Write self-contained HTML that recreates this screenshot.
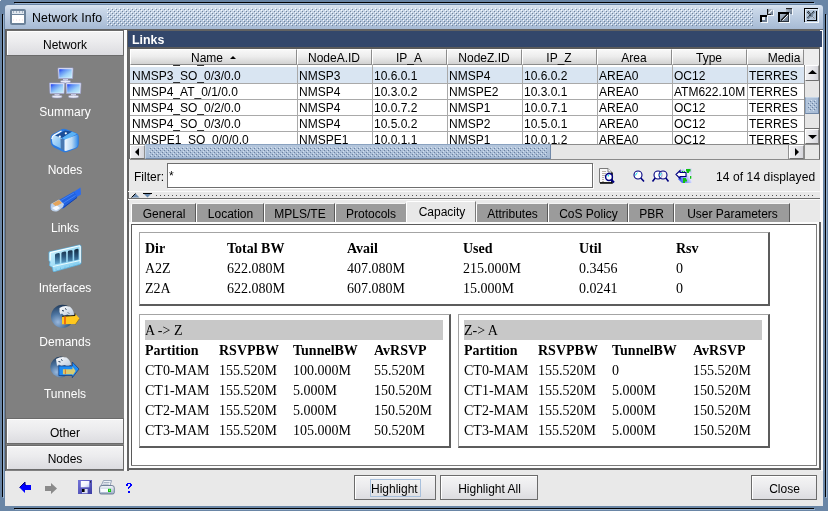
<!DOCTYPE html>
<html><head><meta charset="utf-8">
<style>
*{box-sizing:border-box;margin:0;padding:0}
html,body{width:828px;height:511px;overflow:hidden;background:#6a86a6;font-family:"Liberation Sans",sans-serif;font-size:12px;color:#000}
.a{position:absolute}
.t{position:absolute;white-space:pre;line-height:14px;height:14px}
.s{font-family:"Liberation Serif",serif;font-size:14px;line-height:16px;height:16px}
.b{font-weight:bold}
</style></head><body><div class="a" style="left:0;top:0;width:828px;height:511px;will-change:transform">
<div class="a" style="left:14px;top:2px;width:800px;height:1px;background:#000;"></div>
<div class="a" style="left:15px;top:3px;width:800px;height:1px;background:#9ab3cf;"></div>
<div class="a" style="left:2px;top:14px;width:1px;height:483px;background:#000;"></div>
<div class="a" style="left:3px;top:15px;width:1px;height:483px;background:#9ab3cf;"></div>
<div class="a" style="left:825px;top:14px;width:1px;height:483px;background:#000;"></div>
<div class="a" style="left:826px;top:15px;width:1px;height:483px;background:#9ab3cf;"></div>
<div class="a" style="left:14px;top:508px;width:800px;height:1px;background:#000;"></div>
<div class="a" style="left:15px;top:509px;width:800px;height:1px;background:#9ab3cf;"></div>
<div class="a" style="left:0px;top:0px;width:1px;height:1px;background:#e8eef4;"></div>
<div class="a" style="left:5px;top:5px;width:818px;height:24px;background:linear-gradient(#dae4f0,#c9d7e8 20%,#b3c5dc 70%,#a6bad4);border-radius:3px 3px 0 0"></div>
<svg class="a" style="left:107px;top:8px" width="646" height="18" viewBox="0 0 646 18"><defs><pattern id="tb" width="4" height="4" patternUnits="userSpaceOnUse"><rect x="0" y="0" width="1" height="1" fill="#f6f9fc"/><rect x="1" y="1" width="1" height="1" fill="#71839a"/><rect x="2" y="2" width="1" height="1" fill="#f6f9fc"/><rect x="3" y="3" width="1" height="1" fill="#71839a"/></pattern></defs><rect width="646" height="18" fill="url(#tb)"/></svg>
<div class="t " style="left:32px;top:11px;font-size:12.3px;letter-spacing:0.1px">Network Info</div>
<svg class="a" style="left:10px;top:9px" width="16" height="16" viewBox="0 0 16 16"><rect x="0" y="0" width="16" height="16" rx="2" fill="#6c829a"/><rect x="2" y="2" width="12" height="3" fill="#dfe6ee"/><path d="M3 3h1M6 3h1M9 3h1M12 3h1" stroke="#6c829a" stroke-width="1"/><rect x="2" y="6" width="12" height="8" fill="#fff"/><path d="M3 11h1M6 11h1M9 11h1M12 11h1" stroke="#f0d8e0" stroke-width="1"/></svg>
<svg class="a" style="left:756px;top:4px" width="44" height="22" viewBox="0 0 44 22"><defs><linearGradient id="tbg" x1="0" y1="0" x2="1" y2="1"><stop offset="0" stop-color="#c4d0dc"/><stop offset="1" stop-color="#5c6c82"/></linearGradient></defs><rect x="11" y="5" width="6" height="6" fill="url(#tbg)"/><rect x="11" y="5" width="1.2" height="6" fill="#101010"/><rect x="11" y="10" width="4" height="1" fill="#202020"/><path d="M16.5 5.5 L12.5 9.5" stroke="#f4f8fc" stroke-width="1.1"/><rect x="17" y="6" width="1" height="6" fill="#f4f8fc"/><rect x="12" y="11" width="6" height="1" fill="#f4f8fc"/><rect x="4" y="11" width="7" height="7" fill="#6c7c92"/><rect x="4" y="11" width="7" height="2" fill="#000"/><rect x="4" y="11" width="2" height="7" fill="#000"/><rect x="6" y="13" width="3" height="3" fill="#e6ecf2"/><rect x="5" y="18" width="7" height="1" fill="#f4f8fc"/><rect x="11" y="12" width="1" height="7" fill="#f4f8fc"/><rect x="30" y="4" width="6" height="6" fill="url(#tbg)"/><rect x="30" y="4" width="6" height="1.2" fill="#202020"/><rect x="36" y="5" width="1" height="6" fill="#f4f8fc"/><rect x="22" y="8" width="11" height="10" fill="url(#tbg)"/><rect x="22" y="8" width="11" height="2" fill="#000"/><rect x="22" y="8" width="2" height="10" fill="#000"/><rect x="24" y="17" width="9" height="1" fill="#2a323c"/><rect x="32" y="10" width="1" height="8" fill="#2a323c"/><path d="M25 16.5 L31.5 10" stroke="#101010" stroke-width="1.2"/><path d="M26.5 16.5 L32 11" stroke="#f0f4f8" stroke-width="1"/><rect x="23" y="18" width="11" height="1" fill="#f4f8fc"/><rect x="33" y="9" width="1" height="10" fill="#f4f8fc"/></svg>
<svg class="a" style="left:804px;top:8px" width="16" height="16" viewBox="0 0 16 16"><rect x="0" y="0" width="14" height="14" fill="#b4c6da"/><rect x="0" y="0" width="14" height="1" fill="#000"/><rect x="0" y="0" width="1" height="14" fill="#000"/><rect x="1" y="1" width="12" height="1" fill="#e4ecf4"/><rect x="1" y="1" width="1" height="12" fill="#e4ecf4"/><rect x="3" y="12" width="10" height="1" fill="#000"/><rect x="12" y="3" width="1" height="10" fill="#000"/><rect x="1" y="14" width="14" height="1" fill="#f4f8fc"/><rect x="14" y="1" width="1" height="14" fill="#f4f8fc"/><path d="M3.5 3.5 L10.5 10.5 M10.5 3.5 L3.5 10.5" stroke="#74869a" stroke-width="2.4"/><path d="M3 4 L6.5 7.5 M4 3 L7 6 M10 3 L3 10 " stroke="#000" stroke-width="0.9" stroke-dasharray="1 1"/><path d="M8 9 L10.5 11.5 M9 8 L11.5 10.5" stroke="#f0f4f8" stroke-width="0.9" stroke-dasharray="1 1"/></svg>
<div class="a" style="left:5px;top:29px;width:818px;height:477px;background:#e9e9e9;"></div>
<div class="a" style="left:5px;top:29px;width:818px;height:2px;background:#626262;"></div>
<div class="a" style="left:5px;top:31px;width:119px;height:440px;background:#808080;"></div>
<div class="a" style="left:5px;top:31px;width:1px;height:440px;background:#5e5e5e;"></div>
<div class="a" style="left:7px;top:31px;width:117px;height:25px;background:#fff;"></div>
<div class="a" style="left:6px;top:30px;width:118px;height:26px;background:transparent;border:1px solid #6b6b6b"></div>
<div class="a" style="left:8px;top:32px;width:115px;height:23px;background:linear-gradient(#f3f3f4,#ececee 40%,#dcdce0);"></div>
<div class="t " style="left:6px;width:118px;top:38px;text-align:center;">Network</div>
<div class="a" style="left:7px;top:419px;width:117px;height:25px;background:#fff;"></div>
<div class="a" style="left:6px;top:418px;width:118px;height:26px;background:transparent;border:1px solid #6b6b6b"></div>
<div class="a" style="left:8px;top:420px;width:115px;height:23px;background:linear-gradient(#f3f3f4,#ececee 40%,#dcdce0);"></div>
<div class="t " style="left:6px;width:118px;top:426px;text-align:center;">Other</div>
<div class="a" style="left:7px;top:446px;width:117px;height:24px;background:#fff;"></div>
<div class="a" style="left:6px;top:445px;width:118px;height:25px;background:transparent;border:1px solid #6b6b6b"></div>
<div class="a" style="left:8px;top:447px;width:115px;height:22px;background:linear-gradient(#f3f3f4,#ececee 40%,#dcdce0);"></div>
<div class="t " style="left:6px;width:118px;top:452px;text-align:center;">Nodes</div>
<div class="t " style="left:6px;width:118px;top:105px;text-align:center;color:#fff">Summary</div>
<div class="t " style="left:6px;width:118px;top:163px;text-align:center;color:#fff">Nodes</div>
<div class="t " style="left:6px;width:118px;top:221px;text-align:center;color:#fff">Links</div>
<div class="t " style="left:6px;width:118px;top:281px;text-align:center;color:#fff">Interfaces</div>
<div class="t " style="left:6px;width:118px;top:335px;text-align:center;color:#fff">Demands</div>
<div class="t " style="left:6px;width:118px;top:387px;text-align:center;color:#fff">Tunnels</div>
<svg class="a" style="left:48px;top:66px" width="34" height="34" viewBox="0 0 34 34"><defs><linearGradient id="scr" x1="0" y1="0" x2="1" y2="1"><stop offset="0" stop-color="#1a34f0"/><stop offset="0.25" stop-color="#5a8cf4"/><stop offset="0.6" stop-color="#9cd0f8"/><stop offset="1" stop-color="#c8f0fc"/></linearGradient></defs><path d="M10 2 H25 L24.5 12.5 H10.5Z" fill="#f2f3ff" stroke="#9aa0d0" stroke-width="0.7"/><rect x="11.2" y="3.2" width="12.6" height="8.6" fill="url(#scr)"/><path d="M15 13 h5 v1.5 h-5z" fill="#d4d6ea"/><ellipse cx="17.5" cy="15.6" rx="5.2" ry="1.5" fill="#e8eaf6" stroke="#8c91b8" stroke-width="0.6"/><path d="M1.5 17 H16.5 L16.0 27.5 H2.0Z" fill="#f2f3ff" stroke="#9aa0d0" stroke-width="0.7"/><rect x="2.7" y="18.2" width="12.6" height="8.6" fill="url(#scr)"/><path d="M6.5 28 h5 v1.5 h-5z" fill="#d4d6ea"/><ellipse cx="9.0" cy="30.6" rx="5.2" ry="1.5" fill="#e8eaf6" stroke="#8c91b8" stroke-width="0.6"/><path d="M18 17 H33 L32.5 27.5 H18.5Z" fill="#f2f3ff" stroke="#9aa0d0" stroke-width="0.7"/><rect x="19.2" y="18.2" width="12.6" height="8.6" fill="url(#scr)"/><path d="M23 28 h5 v1.5 h-5z" fill="#d4d6ea"/><ellipse cx="25.5" cy="30.6" rx="5.2" ry="1.5" fill="#e8eaf6" stroke="#8c91b8" stroke-width="0.6"/></svg>
<svg class="a" style="left:50px;top:128px" width="30" height="26" viewBox="0 0 30 26"><defs><linearGradient id="nf" x1="0" y1="0" x2="1" y2="0"><stop offset="0" stop-color="#f2f8fd"/><stop offset="0.55" stop-color="#b8d8f4"/><stop offset="1" stop-color="#3a90ea"/></linearGradient><linearGradient id="nl" x1="0" y1="0" x2="1" y2="1"><stop offset="0" stop-color="#d8f0ff"/><stop offset="1" stop-color="#6cb4f0"/></linearGradient></defs><path d="M0.5 11 Q0.5 7 3 6 L12 1 Q14 0.3 17 1.5 L26 5 Q28.8 6 28.8 9 L28.8 16 Q28.8 19 26 20.5 L17 24 Q15 24.8 13 23.8 L4 19.5 Q1 17.5 0.8 15 Z" fill="#2a7ae0"/><path d="M1.8 10.5 Q2 8 4 7 L10 4 L12 10 L11 20.5 L4 17 Q2.2 16 2.2 14 Z" fill="url(#nl)"/><path d="M1.8 11 Q2 8 4 7 L11.5 3" stroke="#ffffff" stroke-width="1.1" fill="none"/><path d="M5 7.5 L15 2.5 L22 3.8 L12 10 Z" fill="#1a4e98"/><path d="M12 10 L22 3.8 L27 5.8 L16 12 Z" fill="#5ab2f6"/><circle cx="9.8" cy="8.6" r="1.1" fill="#fff"/><circle cx="15.8" cy="5.3" r="1.1" fill="#fff"/><path d="M10.5 10.5 L14.5 11.5 L14.5 22.8 L10.8 20.8 Z" fill="#4a78b0"/><path d="M14.5 11.8 L27.8 6.5 L27.8 17 Q27.8 19 25 20 L16 23 L14.5 22.8 Z" fill="url(#nf)"/></svg>
<svg class="a" style="left:50px;top:187px" width="32" height="26" viewBox="0 0 32 26"><path d="M22 6 L30.5 0.5 L31 7.5 L25 11 Z" fill="#2a6cf0"/><path d="M9 13 L24 4.5 L27.5 10 L14 21 Q11 22.5 9.5 19.5 Z" fill="#2262e0"/><path d="M10 14 L24 6 M12 17 L25.5 8.5" stroke="#4a8af8" stroke-width="0.8"/><path d="M13.5 20.5 L27 10.5" stroke="#1440a8" stroke-width="1"/><path d="M0.8 17 L9 12.5 L14 17 L13 20 L8 24 Q3 25.5 1 22.5 Q0 19.5 0.8 17 Z" fill="#bcd0ea"/><path d="M2.5 16.5 L9 13 L12 16 L6 19.5 Z" fill="#e4a45c"/><path d="M2 21 L7 18.5 L10 21 L6 23.5 Z" fill="#f4f8ff"/><path d="M0.8 17 Q0 20 1 22.5" stroke="#6a8ec8" stroke-width="0.8" fill="none"/></svg>
<svg class="a" style="left:48px;top:243px" width="34" height="30" viewBox="0 0 34 30"><defs><linearGradient id="slot" x1="0" y1="0" x2="0" y2="1"><stop offset="0" stop-color="#14283c"/><stop offset="0.5" stop-color="#2c5a80"/><stop offset="1" stop-color="#62aad4"/></linearGradient><linearGradient id="frm" x1="0" y1="0" x2="1" y2="1"><stop offset="0" stop-color="#d8f6ff"/><stop offset="0.5" stop-color="#9edcf6"/><stop offset="1" stop-color="#7cc8ec"/></linearGradient></defs><path d="M1 9 L31.5 2 Q33 2 33 3.5 L33 20 Q33 21 32 21.3 L6.5 28.5 Q5 29 5 27.5 L4.5 24.5 L1.5 22.5 L2 19 L1 17.5 Z" fill="url(#frm)" stroke="#58b4e4" stroke-width="0.8"/><path d="M2 9.6 L31.5 2.8 L32.2 3.6 L32.2 19.8 M2.2 17.5 L2.2 10" stroke="#f8feff" stroke-width="1.1" fill="none"/><path d="M5 23.5 L32 17.5" stroke="#e8fbff" stroke-width="1" fill="none"/><path d="M8 25.5 v1.5 M12.5 24.5 v1.5 M17 23.5 v1.5 M21.5 22.5 v1.5 M26 21.5 v1.5" stroke="#70c4ec" stroke-width="1" fill="none"/><path d="M7 12 Q7 10.6 8.5 10.4 L10.5 10 Q11.8 9.8 11.8 11.2 L11.8 20.4 L7 21.3Z M13.4 10.6 Q13.4 9.2 14.8 9 L16.8 8.6 Q18.2 8.4 18.2 9.8 L18.2 19.2 L13.4 20.1Z M19.8 9.2 Q19.8 7.8 21.2 7.6 L23.2 7.2 Q24.6 7 24.6 8.4 L24.6 17.9 L19.8 18.8Z M26.2 7.8 Q26.2 6.4 27.6 6.2 L29.2 5.8 Q30.6 5.6 30.6 7 L30.6 16.6 L26.2 17.5Z" fill="url(#slot)"/></svg>
<svg class="a" style="left:50px;top:304px" width="32" height="25" viewBox="0 0 32 25"><defs><radialGradient id="glb" cx="0.3" cy="0.75" r="0.8"><stop offset="0" stop-color="#9ab8dc"/><stop offset="0.45" stop-color="#4c74a0"/><stop offset="1" stop-color="#1c3452"/></radialGradient><linearGradient id="cont" x1="0" y1="0" x2="1" y2="1"><stop offset="0" stop-color="#ffffff"/><stop offset="1" stop-color="#b8c8dc"/></linearGradient></defs><circle cx="12.5" cy="12.3" r="11.5" fill="url(#glb)"/><path d="M9.5 4 Q14.5 0.5 20 2.8 Q24 6 24 11 L20.5 12 L17.5 10.5 L14 11.5 L12 9.5 L10.5 10.5 L9.5 8 Z" fill="url(#cont)"/><path d="M15 4.5 l1.5 1 M12 6.5 l2 0.5 M18 8.5 l1 1" stroke="#1c3452" stroke-width="1"/><path d="M12 12.3 L25 11.5 L25 9.5 L29.5 14.6 L25 21 L25 20 L12 20.3 Z" fill="#ffc81e"/><path d="M12 12.3 L25 11.5 L25 9.5" stroke="#101010" stroke-width="0.9" fill="none"/><path d="M25 21 L29.5 14.6" stroke="#806010" stroke-width="0.6" fill="none"/><rect x="14" y="12.5" width="2" height="7.8" fill="#f07010"/></svg>
<svg class="a" style="left:49px;top:356px" width="32" height="24" viewBox="0 0 32 24"><defs><radialGradient id="glb2" cx="0.3" cy="0.75" r="0.8"><stop offset="0" stop-color="#9ab8dc"/><stop offset="0.45" stop-color="#4c74a0"/><stop offset="1" stop-color="#1c3452"/></radialGradient></defs><circle cx="11.7" cy="11" r="10.4" fill="url(#glb2)"/><path d="M7 3 Q12 0 17.5 1.5 Q21.5 4 22 9 L18.5 10.5 L15.5 9 L12.5 10 L10 8.5 L8 10 Z" fill="url(#cont)"/><path d="M12 3.5 l1.5 1 M9.5 5.5 l2 0.5" stroke="#1c3452" stroke-width="1"/><path d="M9.8 10 L23.3 10 L23.3 6 L30 13 L23.3 21.7 L23.3 19.5 L9.8 19.5 Z" fill="#1e8cf4" stroke="#0a2c70" stroke-width="0.6"/><path d="M13.9 13.2 L23.5 13.2 L23.5 10.5 L26.7 15 L23.5 19.5 L23.5 18.2 L13.9 18.2 Z" fill="#d8cc70"/><rect x="15.8" y="13.2" width="1.2" height="5" fill="#e08030"/></svg>
<div class="a" style="left:124px;top:30px;width:3px;height:441px;background:#fbfbfb;"></div>
<div class="a" style="left:127px;top:30px;width:2px;height:441px;background:#646464;"></div>
<div class="a" style="left:129px;top:222px;width:2px;height:246px;background:#fbfbfb;"></div>
<div class="a" style="left:820px;top:30px;width:3px;height:441px;background:#fafafa;"></div>
<div class="a" style="left:128px;top:31px;width:694px;height:16px;background:#33476b;"></div>
<div class="t " style="left:132px;top:33px;font-size:12.4px;color:#fff;font-weight:bold">Links</div>
<div class="a" style="left:128px;top:47px;width:692px;height:2px;background:#5c5c5c;"></div>
<div class="a" style="left:128px;top:49px;width:2px;height:110px;background:#6a6a6a;"></div>
<div class="a" style="left:130px;top:49px;width:674px;height:95px;background:#fff;"></div>
<div class="a" style="left:130px;top:65px;width:674px;height:79px;overflow:hidden;background:#fff">
<div class="t" style="left:2px;top:-13px">NMSP3_SO_0/2/0.0</div>
<div class="a" style="left:0px;top:2px;width:674px;height:16px;background:#d9e5f2"></div>
<div class="t" style="left:2px;top:4px;width:164px;overflow:hidden">NMSP3_SO_0/3/0.0</div>
<div class="t" style="left:169px;top:4px;width:72px;overflow:hidden">NMSP3</div>
<div class="t" style="left:244px;top:4px;width:72px;overflow:hidden">10.6.0.1</div>
<div class="t" style="left:319px;top:4px;width:72px;overflow:hidden">NMSP4</div>
<div class="t" style="left:394px;top:4px;width:72px;overflow:hidden">10.6.0.2</div>
<div class="t" style="left:469px;top:4px;width:72px;overflow:hidden">AREA0</div>
<div class="t" style="left:544px;top:4px;width:72px;overflow:hidden">OC12</div>
<div class="t" style="left:619px;top:4px;width:54px;overflow:hidden">TERRES</div>
<div class="t" style="left:2px;top:20px;width:164px;overflow:hidden">NMSP4_AT_0/1/0.0</div>
<div class="t" style="left:169px;top:20px;width:72px;overflow:hidden">NMSP4</div>
<div class="t" style="left:244px;top:20px;width:72px;overflow:hidden">10.3.0.2</div>
<div class="t" style="left:319px;top:20px;width:72px;overflow:hidden">NMSPE2</div>
<div class="t" style="left:394px;top:20px;width:72px;overflow:hidden">10.3.0.1</div>
<div class="t" style="left:469px;top:20px;width:72px;overflow:hidden">AREA0</div>
<div class="t" style="left:544px;top:20px;width:72px;overflow:hidden">ATM622.10M</div>
<div class="t" style="left:619px;top:20px;width:54px;overflow:hidden">TERRES</div>
<div class="a" style="left:0px;top:18px;width:674px;height:1px;background:#a9a9a9"></div>
<div class="t" style="left:2px;top:36px;width:164px;overflow:hidden">NMSP4_SO_0/2/0.0</div>
<div class="t" style="left:169px;top:36px;width:72px;overflow:hidden">NMSP4</div>
<div class="t" style="left:244px;top:36px;width:72px;overflow:hidden">10.0.7.2</div>
<div class="t" style="left:319px;top:36px;width:72px;overflow:hidden">NMSP1</div>
<div class="t" style="left:394px;top:36px;width:72px;overflow:hidden">10.0.7.1</div>
<div class="t" style="left:469px;top:36px;width:72px;overflow:hidden">AREA0</div>
<div class="t" style="left:544px;top:36px;width:72px;overflow:hidden">OC12</div>
<div class="t" style="left:619px;top:36px;width:54px;overflow:hidden">TERRES</div>
<div class="a" style="left:0px;top:34px;width:674px;height:1px;background:#a9a9a9"></div>
<div class="t" style="left:2px;top:52px;width:164px;overflow:hidden">NMSP4_SO_0/3/0.0</div>
<div class="t" style="left:169px;top:52px;width:72px;overflow:hidden">NMSP4</div>
<div class="t" style="left:244px;top:52px;width:72px;overflow:hidden">10.5.0.2</div>
<div class="t" style="left:319px;top:52px;width:72px;overflow:hidden">NMSP2</div>
<div class="t" style="left:394px;top:52px;width:72px;overflow:hidden">10.5.0.1</div>
<div class="t" style="left:469px;top:52px;width:72px;overflow:hidden">AREA0</div>
<div class="t" style="left:544px;top:52px;width:72px;overflow:hidden">OC12</div>
<div class="t" style="left:619px;top:52px;width:54px;overflow:hidden">TERRES</div>
<div class="a" style="left:0px;top:50px;width:674px;height:1px;background:#a9a9a9"></div>
<div class="t" style="left:2px;top:68px;width:164px;overflow:hidden">NMSPE1_SO_0/0/0.0</div>
<div class="t" style="left:169px;top:68px;width:72px;overflow:hidden">NMSPE1</div>
<div class="t" style="left:244px;top:68px;width:72px;overflow:hidden">10.0.1.1</div>
<div class="t" style="left:319px;top:68px;width:72px;overflow:hidden">NMSP1</div>
<div class="t" style="left:394px;top:68px;width:72px;overflow:hidden">10.0.1.2</div>
<div class="t" style="left:469px;top:68px;width:72px;overflow:hidden">AREA0</div>
<div class="t" style="left:544px;top:68px;width:72px;overflow:hidden">OC12</div>
<div class="t" style="left:619px;top:68px;width:54px;overflow:hidden">TERRES</div>
<div class="a" style="left:0px;top:66px;width:674px;height:1px;background:#a9a9a9"></div>
<div class="a" style="left:0px;top:82px;width:674px;height:1px;background:#a9a9a9"></div>
<div class="a" style="left:167px;top:0px;width:1px;height:79px;background:#a9a9a9"></div>
<div class="a" style="left:242px;top:0px;width:1px;height:79px;background:#a9a9a9"></div>
<div class="a" style="left:317px;top:0px;width:1px;height:79px;background:#a9a9a9"></div>
<div class="a" style="left:392px;top:0px;width:1px;height:79px;background:#a9a9a9"></div>
<div class="a" style="left:467px;top:0px;width:1px;height:79px;background:#a9a9a9"></div>
<div class="a" style="left:542px;top:0px;width:1px;height:79px;background:#a9a9a9"></div>
<div class="a" style="left:617px;top:0px;width:1px;height:79px;background:#a9a9a9"></div>
</div>
<div class="a" style="left:130px;top:49px;width:167px;height:16px;background:linear-gradient(#f8f8f8,#ededed 45%,#d2d2d2);border-top:1px solid #fff;border-left:1px solid #fff;border-right:1px solid #8c8c8c;border-bottom:1px solid #8c8c8c"></div>
<div class="t " style="left:191px;top:51px;">Name</div>
<div class="a" style="left:297px;top:49px;width:75px;height:16px;background:linear-gradient(#f8f8f8,#ededed 45%,#d2d2d2);border-top:1px solid #fff;border-left:1px solid #fff;border-right:1px solid #8c8c8c;border-bottom:1px solid #8c8c8c"></div>
<div class="t " style="left:297px;width:74px;top:51px;text-align:center;">NodeA.ID</div>
<div class="a" style="left:372px;top:49px;width:75px;height:16px;background:linear-gradient(#f8f8f8,#ededed 45%,#d2d2d2);border-top:1px solid #fff;border-left:1px solid #fff;border-right:1px solid #8c8c8c;border-bottom:1px solid #8c8c8c"></div>
<div class="t " style="left:372px;width:74px;top:51px;text-align:center;">IP_A</div>
<div class="a" style="left:447px;top:49px;width:75px;height:16px;background:linear-gradient(#f8f8f8,#ededed 45%,#d2d2d2);border-top:1px solid #fff;border-left:1px solid #fff;border-right:1px solid #8c8c8c;border-bottom:1px solid #8c8c8c"></div>
<div class="t " style="left:447px;width:74px;top:51px;text-align:center;">NodeZ.ID</div>
<div class="a" style="left:522px;top:49px;width:75px;height:16px;background:linear-gradient(#f8f8f8,#ededed 45%,#d2d2d2);border-top:1px solid #fff;border-left:1px solid #fff;border-right:1px solid #8c8c8c;border-bottom:1px solid #8c8c8c"></div>
<div class="t " style="left:522px;width:74px;top:51px;text-align:center;">IP_Z</div>
<div class="a" style="left:597px;top:49px;width:75px;height:16px;background:linear-gradient(#f8f8f8,#ededed 45%,#d2d2d2);border-top:1px solid #fff;border-left:1px solid #fff;border-right:1px solid #8c8c8c;border-bottom:1px solid #8c8c8c"></div>
<div class="t " style="left:597px;width:74px;top:51px;text-align:center;">Area</div>
<div class="a" style="left:672px;top:49px;width:75px;height:16px;background:linear-gradient(#f8f8f8,#ededed 45%,#d2d2d2);border-top:1px solid #fff;border-left:1px solid #fff;border-right:1px solid #8c8c8c;border-bottom:1px solid #8c8c8c"></div>
<div class="t " style="left:672px;width:74px;top:51px;text-align:center;">Type</div>
<div class="a" style="left:747px;top:49px;width:57px;height:16px;background:linear-gradient(#f8f8f8,#ededed 45%,#d2d2d2);border-top:1px solid #fff;border-left:1px solid #fff;border-right:1px solid #8c8c8c;border-bottom:1px solid #8c8c8c"></div>
<div class="t " style="left:747px;width:74px;top:51px;text-align:center;">Media</div>
<svg class="a" style="left:230px;top:56px" width="6" height="3" viewBox="0 0 6 3"><path d="M0 3 L3 0 L6 3Z" fill="#000"/></svg>
<div class="a" style="left:804px;top:49px;width:15px;height:16px;background:#ededed;"></div>
<div class="a" style="left:819px;top:47px;width:1px;height:113px;background:#6a6a6a;"></div>
<div class="a" style="left:804px;top:65px;width:15px;height:79px;background:#e6e6e6;"></div>
<div class="a" style="left:804px;top:65px;width:1px;height:80px;background:#8a8a8a;"></div>
<div class="a" style="left:805px;top:65px;width:14px;height:16px;background:linear-gradient(90deg,#f0f0f2,#e4e4e8 60%,#d6d6dc);border-top:1px solid #fff;border-left:1px solid #fff;border-bottom:1px solid #707070;border-right:1px solid #909090"></div>
<svg class="a" style="left:808px;top:70px" width="9" height="4" viewBox="0 0 9 4"><path d="M0 4 L4.5 0 L9 4Z" fill="#000"/></svg>
<div class="a" style="left:805px;top:97px;width:14px;height:17px;background:linear-gradient(90deg,#b4c6dc,#a4b9d4);border-top:1px solid #c6d6e8;border-left:1px solid #8aa2c0;border-bottom:1px solid #7088a8;border-right:1px solid #7088a8"></div>
<svg class="a" style="left:806px;top:98px" width="12" height="15" viewBox="0 0 12 15"><defs><pattern id="vs" width="4" height="4" patternUnits="userSpaceOnUse"><rect x="0" y="3" width="1" height="1" fill="#6a80a0"/><rect x="2" y="1" width="1" height="1" fill="#6a80a0"/><rect x="3" y="0" width="1" height="1" fill="#d4e0ee"/><rect x="1" y="2" width="1" height="1" fill="#d4e0ee"/></pattern></defs><rect x="2" y="2" width="9" height="11" fill="url(#vs)"/></svg>
<div class="a" style="left:805px;top:128px;width:14px;height:1px;background:#707070;"></div>
<div class="a" style="left:805px;top:129px;width:14px;height:15px;background:linear-gradient(90deg,#f0f0f2,#e4e4e8 60%,#d6d6dc);border-top:1px solid #fff;border-left:1px solid #fff;border-bottom:1px solid #707070;border-right:1px solid #909090"></div>
<svg class="a" style="left:808px;top:135px" width="9" height="4" viewBox="0 0 9 4"><path d="M0 0 L4.5 4 L9 0Z" fill="#000"/></svg>
<div class="a" style="left:130px;top:144px;width:674px;height:15px;background:#e6e6e6;border-top:1px solid #8c8c8c"></div>
<div class="a" style="left:130px;top:145px;width:15px;height:14px;background:linear-gradient(90deg,#f0f0f2,#e4e4e8 60%,#d6d6dc);border-top:1px solid #fff;border-left:1px solid #fff;border-bottom:1px solid #707070;border-right:1px solid #909090"></div>
<svg class="a" style="left:135px;top:148px" width="4" height="8" viewBox="0 0 4 8"><path d="M4 0 L0 4 L4 8Z" fill="#000"/></svg>
<div class="a" style="left:145px;top:144px;width:406px;height:15px;background:linear-gradient(#b4c6dc,#a4b9d4);border-top:1px solid #8aa2c0;border-left:1px solid #c6d6e8;border-bottom:1px solid #7088a8;border-right:1px solid #7088a8"></div>
<svg class="a" style="left:146px;top:145px" width="404" height="13" viewBox="0 0 404 13"><defs><pattern id="hs" width="4" height="4" patternUnits="userSpaceOnUse"><rect x="0" y="3" width="1" height="1" fill="#6a80a0"/><rect x="2" y="1" width="1" height="1" fill="#6a80a0"/><rect x="3" y="0" width="1" height="1" fill="#d4e0ee"/><rect x="1" y="2" width="1" height="1" fill="#d4e0ee"/></pattern></defs><rect x="3" y="2" width="398" height="10" fill="url(#hs)"/></svg>
<div class="a" style="left:788px;top:145px;width:1px;height:14px;background:#909090;"></div>
<div class="a" style="left:789px;top:145px;width:15px;height:14px;background:linear-gradient(90deg,#f0f0f2,#e4e4e8 60%,#d6d6dc);border-top:1px solid #fff;border-left:1px solid #fff;border-bottom:1px solid #707070;border-right:1px solid #909090"></div>
<svg class="a" style="left:795px;top:148px" width="4" height="8" viewBox="0 0 4 8"><path d="M0 0 L4 4 L0 8Z" fill="#000"/></svg>
<div class="a" style="left:804px;top:144px;width:15px;height:15px;background:#e8e8e8;border-left:1px solid #8a8a8a;border-top:1px solid #8a8a8a"></div>
<div class="a" style="left:130px;top:159px;width:690px;height:1px;background:#8a8a8a;"></div>
<div class="t " style="left:134px;top:170px;">Filter:</div>
<div class="a" style="left:168px;top:164px;width:426px;height:25px;background:#fff;"></div>
<div class="a" style="left:167px;top:163px;width:426px;height:25px;background:#fff;border:1px solid #6e6e6e"></div>
<div class="t " style="left:169px;top:169px;">*</div>
<div class="t " style="left:716px;top:170px;letter-spacing:0.1px">14 of 14 displayed</div>
<svg class="a" style="left:598px;top:167px" width="18" height="18" viewBox="0 0 18 18"><path d="M1.5 1.5 H10 L13.5 5 V15.5 H1.5Z" fill="#fafafa" stroke="#7a7a7a" stroke-width="1"/><path d="M2 16 H14 V5.5" fill="none" stroke="#000" stroke-width="1.6"/><path d="M10 1.5 V5 H13.5" fill="#fff" stroke="#7a7a7a" stroke-width="1"/><path d="M4 4.5 h4 M4 6.5 h4 M4 8.5 h3 M4 10.5 h2 M4 12.5 h2 M4 14.5 h2" stroke="#b8b0a8" stroke-width="1"/><circle cx="11" cy="10" r="3.4" fill="#fff" stroke="#000080" stroke-width="1.5"/><path d="M9.8 9.2 l1 -1" stroke="#00e0f0" stroke-width="1.3"/><path d="M13.3 12.8 L16 15.5" stroke="#000080" stroke-width="2"/></svg>
<svg class="a" style="left:632px;top:170px" width="40" height="14" viewBox="0 0 40 14"><circle cx="6" cy="5" r="4" fill="#fff" stroke="#000080" stroke-width="1.1"/><path d="M3.6 5.5 Q3.8 3.5 5.5 2.8" stroke="#00d8f0" stroke-width="1" fill="none"/><path d="M8.8 8 L12 11.5" stroke="#000080" stroke-width="1.6"/><circle cx="26" cy="5" r="4" fill="#fff" stroke="#000080" stroke-width="1.1"/><circle cx="31" cy="5" r="4" fill="#fff" fill-opacity="0.6" stroke="#000080" stroke-width="1.1"/><path d="M27.8 6 Q28 4 29.5 3" stroke="#00d8f0" stroke-width="1" fill="none"/><path d="M23.2 8 L20.5 11.5 M33.8 8 L36.5 11.5" stroke="#000080" stroke-width="1.6"/></svg>
<svg class="a" style="left:675px;top:168px" width="18" height="16" viewBox="0 0 18 16"><defs><linearGradient id="g2" x1="0" y1="1" x2="1" y2="0.3"><stop offset="0" stop-color="#2040f0"/><stop offset="0.45" stop-color="#8a9cf8"/><stop offset="0.8" stop-color="#f0f0ff"/><stop offset="1" stop-color="#c8ccf8"/></linearGradient></defs><path d="M9 0.5 L16.5 0.5 L16.5 15 L7 15 L3.5 11.5 L3.5 4 Z" fill="url(#g2)"/><path d="M11 1 h4.5 v2.5 h-1.5 v1.5 h-2 v-1.5 h-1Z M7 3 h1.2 v1.2 h-1.2Z M9 3 h1 v1 h-1Z M8 10 h3 v1.5 h1 v2 h-2 v1.5 h-2Z M15 8 h1.3 v2.8 h-1.3Z" fill="#10c010"/><path d="M1 6.5 L5 2.5 L5 4.5 L11 4.5 L11 8.5 L5 8.5 L5 10.5 Z" fill="#fff" stroke="#000080" stroke-width="1.1" stroke-linejoin="miter"/></svg>
<div class="a" style="left:128px;top:191px;width:692px;height:1px;background:#fafafa;"></div>
<div class="a" style="left:128px;top:198px;width:692px;height:1px;background:#6e6e6e;"></div>
<svg class="a" style="left:131px;top:193px" width="22" height="5" viewBox="0 0 22 5"><path d="M0.5 4.5 L4.5 0.5 L8.5 4.5Z" fill="#6c8cb0"/><path d="M0.5 4.5 L4.5 0.5" stroke="#000" stroke-width="1"/><path d="M12.5 0.5 L20.5 0.5 L16.5 4.5Z" fill="#6c8cb0"/><path d="M12 0.5 H21" stroke="#000" stroke-width="1"/></svg>
<svg class="a" style="left:156px;top:195px" width="660" height="1" viewBox="0 0 660 1"><defs><pattern id="dd" width="4" height="1" patternUnits="userSpaceOnUse"><rect x="0" y="0" width="1" height="1" fill="#555"/></pattern></defs><rect width="660" height="1" fill="url(#dd)"/></svg>
<div class="a" style="left:128px;top:199px;width:692px;height:1px;background:#fbfbfb;"></div>
<div class="a" style="left:130px;top:222px;width:689px;height:2px;background:#fdfdfd;"></div>
<div class="a" style="left:131px;top:224px;width:686px;height:1px;background:#5a5a5a;"></div>
<div class="a" style="left:131px;top:203px;width:65px;height:19px;background:#9b9b9b;border-left:1px solid #fff;border-top:1px solid #f4f4f4;border-right:1px solid #5a5a5a;border-top-left-radius:2px"></div>
<div class="t " style="left:132px;width:64px;top:207px;text-align:center;">General</div>
<div class="a" style="left:196px;top:203px;width:68px;height:19px;background:#9b9b9b;border-left:1px solid #fff;border-top:1px solid #f4f4f4;border-right:1px solid #5a5a5a;border-top-left-radius:2px"></div>
<div class="t " style="left:197px;width:67px;top:207px;text-align:center;">Location</div>
<div class="a" style="left:264px;top:203px;width:71px;height:19px;background:#9b9b9b;border-left:1px solid #fff;border-top:1px solid #f4f4f4;border-right:1px solid #5a5a5a;border-top-left-radius:2px"></div>
<div class="t " style="left:265px;width:70px;top:207px;text-align:center;">MPLS/TE</div>
<div class="a" style="left:335px;top:203px;width:71px;height:19px;background:#9b9b9b;border-left:1px solid #fff;border-top:1px solid #f4f4f4;border-right:1px solid #9b9b9b;border-top-left-radius:2px"></div>
<div class="t " style="left:336px;width:70px;top:207px;text-align:center;">Protocols</div>
<div class="a" style="left:406px;top:201px;width:70px;height:21px;background:#e8e8e8;border-left:1px solid #fff;border-top:1px solid #fff;border-right:1px solid #7a7a7a;border-top-left-radius:2px"></div>
<div class="t " style="left:407px;width:70px;top:205px;text-align:center;">Capacity</div>
<div class="a" style="left:476px;top:203px;width:72px;height:19px;background:#9b9b9b;border-left:1px solid #fff;border-top:1px solid #f4f4f4;border-right:1px solid #5a5a5a;border-top-left-radius:2px"></div>
<div class="t " style="left:477px;width:71px;top:207px;text-align:center;">Attributes</div>
<div class="a" style="left:548px;top:203px;width:80px;height:19px;background:#9b9b9b;border-left:1px solid #fff;border-top:1px solid #f4f4f4;border-right:1px solid #5a5a5a;border-top-left-radius:2px"></div>
<div class="t " style="left:549px;width:79px;top:207px;text-align:center;">CoS Policy</div>
<div class="a" style="left:628px;top:203px;width:46px;height:19px;background:#9b9b9b;border-left:1px solid #fff;border-top:1px solid #f4f4f4;border-right:1px solid #5a5a5a;border-top-left-radius:2px"></div>
<div class="t " style="left:629px;width:45px;top:207px;text-align:center;">PBR</div>
<div class="a" style="left:674px;top:203px;width:116px;height:19px;background:#9b9b9b;border-left:1px solid #fff;border-top:1px solid #f4f4f4;border-right:1px solid #5a5a5a;border-top-left-radius:2px"></div>
<div class="t " style="left:675px;width:115px;top:207px;text-align:center;">User Parameters</div>
<div class="a" style="left:131px;top:224px;width:1px;height:242px;background:#5a5a5a;"></div>
<div class="a" style="left:132px;top:225px;width:684px;height:240px;background:#fff;"></div>
<div class="a" style="left:816px;top:224px;width:1px;height:242px;background:#7c7c7c;"></div>
<div class="a" style="left:131px;top:465px;width:686px;height:1px;background:#7c7c7c;"></div>
<div class="a" style="left:817px;top:222px;width:2px;height:246px;background:#fdfdfd;"></div>
<div class="a" style="left:130px;top:466px;width:689px;height:2px;background:#fdfdfd;"></div>
<div class="a" style="left:819px;top:222px;width:2px;height:248px;background:#626262;"></div>
<div class="a" style="left:128px;top:468px;width:693px;height:2px;background:#626262;"></div>
<div class="a" style="left:139px;top:232px;width:631px;height:74px;background:#fff;border-top:1px solid #a4a4a4;border-left:1px solid #a4a4a4;border-right:2px solid #5c5c5c;border-bottom:2px solid #5c5c5c"></div>
<div class="t s b" style="left:145px;top:241px;">Dir</div>
<div class="t s b" style="left:227px;top:241px;">Total BW</div>
<div class="t s b" style="left:347px;top:241px;">Avail</div>
<div class="t s b" style="left:463px;top:241px;">Used</div>
<div class="t s b" style="left:579px;top:241px;">Util</div>
<div class="t s b" style="left:676px;top:241px;">Rsv</div>
<div class="t s" style="left:145px;top:261px;">A2Z</div>
<div class="t s" style="left:227px;top:261px;">622.080M</div>
<div class="t s" style="left:347px;top:261px;">407.080M</div>
<div class="t s" style="left:463px;top:261px;">215.000M</div>
<div class="t s" style="left:579px;top:261px;">0.3456</div>
<div class="t s" style="left:676px;top:261px;">0</div>
<div class="t s" style="left:145px;top:281px;">Z2A</div>
<div class="t s" style="left:227px;top:281px;">622.080M</div>
<div class="t s" style="left:347px;top:281px;">607.080M</div>
<div class="t s" style="left:463px;top:281px;">15.000M</div>
<div class="t s" style="left:579px;top:281px;">0.0241</div>
<div class="t s" style="left:676px;top:281px;">0</div>
<div class="a" style="left:139px;top:314px;width:312px;height:134px;background:#fff;border-top:1px solid #a4a4a4;border-left:1px solid #a4a4a4;border-right:2px solid #5c5c5c;border-bottom:2px solid #5c5c5c"></div>
<div class="a" style="left:145px;top:320px;width:298px;height:20px;background:#c8c8c8;"></div>
<div class="t s" style="left:145px;top:323px;">A -&gt; Z</div>
<div class="t s b" style="left:145px;top:343px;">Partition</div>
<div class="t s b" style="left:219px;top:343px;">RSVPBW</div>
<div class="t s b" style="left:293px;top:343px;">TunnelBW</div>
<div class="t s b" style="left:374px;top:343px;">AvRSVP</div>
<div class="t s" style="left:145px;top:363px;">CT0-MAM</div>
<div class="t s" style="left:219px;top:363px;">155.520M</div>
<div class="t s" style="left:293px;top:363px;">100.000M</div>
<div class="t s" style="left:374px;top:363px;">55.520M</div>
<div class="t s" style="left:145px;top:383px;">CT1-MAM</div>
<div class="t s" style="left:219px;top:383px;">155.520M</div>
<div class="t s" style="left:293px;top:383px;">5.000M</div>
<div class="t s" style="left:374px;top:383px;">150.520M</div>
<div class="t s" style="left:145px;top:403px;">CT2-MAM</div>
<div class="t s" style="left:219px;top:403px;">155.520M</div>
<div class="t s" style="left:293px;top:403px;">5.000M</div>
<div class="t s" style="left:374px;top:403px;">150.520M</div>
<div class="t s" style="left:145px;top:423px;">CT3-MAM</div>
<div class="t s" style="left:219px;top:423px;">155.520M</div>
<div class="t s" style="left:293px;top:423px;">105.000M</div>
<div class="t s" style="left:374px;top:423px;">50.520M</div>
<div class="a" style="left:458px;top:314px;width:312px;height:134px;background:#fff;border-top:1px solid #a4a4a4;border-left:1px solid #a4a4a4;border-right:2px solid #5c5c5c;border-bottom:2px solid #5c5c5c"></div>
<div class="a" style="left:464px;top:320px;width:298px;height:20px;background:#c8c8c8;"></div>
<div class="t s" style="left:464px;top:323px;">Z-&gt; A</div>
<div class="t s b" style="left:464px;top:343px;">Partition</div>
<div class="t s b" style="left:538px;top:343px;">RSVPBW</div>
<div class="t s b" style="left:612px;top:343px;">TunnelBW</div>
<div class="t s b" style="left:693px;top:343px;">AvRSVP</div>
<div class="t s" style="left:464px;top:363px;">CT0-MAM</div>
<div class="t s" style="left:538px;top:363px;">155.520M</div>
<div class="t s" style="left:612px;top:363px;">0</div>
<div class="t s" style="left:693px;top:363px;">155.520M</div>
<div class="t s" style="left:464px;top:383px;">CT1-MAM</div>
<div class="t s" style="left:538px;top:383px;">155.520M</div>
<div class="t s" style="left:612px;top:383px;">5.000M</div>
<div class="t s" style="left:693px;top:383px;">150.520M</div>
<div class="t s" style="left:464px;top:403px;">CT2-MAM</div>
<div class="t s" style="left:538px;top:403px;">155.520M</div>
<div class="t s" style="left:612px;top:403px;">5.000M</div>
<div class="t s" style="left:693px;top:403px;">150.520M</div>
<div class="t s" style="left:464px;top:423px;">CT3-MAM</div>
<div class="t s" style="left:538px;top:423px;">155.520M</div>
<div class="t s" style="left:612px;top:423px;">5.000M</div>
<div class="t s" style="left:693px;top:423px;">150.520M</div>
<div class="a" style="left:355px;top:476px;width:81px;height:24px;background:#fff;"></div>
<div class="a" style="left:354px;top:475px;width:82px;height:25px;background:transparent;border:1px solid #6b6b6b"></div>
<div class="a" style="left:356px;top:477px;width:79px;height:22px;background:linear-gradient(#f3f3f4,#ececee 40%,#dcdce0);"></div>
<div class="a" style="left:370px;top:479px;width:51px;height:18px;background:transparent;border:1px solid #a8c0dc"></div>
<div class="t " style="left:371px;top:482px;">Highlight</div>
<div class="a" style="left:441px;top:476px;width:97px;height:24px;background:#fff;"></div>
<div class="a" style="left:440px;top:475px;width:98px;height:25px;background:transparent;border:1px solid #6b6b6b"></div>
<div class="a" style="left:442px;top:477px;width:95px;height:22px;background:linear-gradient(#f3f3f4,#ececee 40%,#dcdce0);"></div>
<div class="t " style="left:441px;width:97px;top:482px;text-align:center;">Highlight All</div>
<div class="a" style="left:752px;top:476px;width:65px;height:24px;background:#fff;"></div>
<div class="a" style="left:751px;top:475px;width:66px;height:25px;background:transparent;border:1px solid #6b6b6b"></div>
<div class="a" style="left:753px;top:477px;width:63px;height:22px;background:linear-gradient(#f3f3f4,#ececee 40%,#dcdce0);"></div>
<div class="t " style="left:752px;width:65px;top:482px;text-align:center;">Close</div>
<svg class="a" style="left:18px;top:479px" width="100" height="17" viewBox="0 0 100 17"><g transform="translate(0,2)"><path d="M1.5 6.5 L7 1 L7 4 L13 4 L13 9 L7 9 L7 12Z" fill="#0000ff"/><path d="M1.5 6.5 L7 1 L7 4 L8 4" stroke="#000080" stroke-width="1" fill="none"/><path d="M27 5 L33 5 L33 2 L39 7.5 L33 13 L33 10 L27 10Z" fill="#8a8a8a"/><defs><linearGradient id="fl" x1="0" y1="0" x2="1" y2="1"><stop offset="0" stop-color="#7474d8"/><stop offset="1" stop-color="#3c3ca4"/></linearGradient><linearGradient id="lb" x1="0" y1="0" x2="1" y2="1"><stop offset="0" stop-color="#ffffff"/><stop offset="0.6" stop-color="#f0f2ff"/><stop offset="1" stop-color="#b8c4f0"/></linearGradient><linearGradient id="pb" x1="0" y1="0" x2="0" y2="1"><stop offset="0" stop-color="#f4f8fc"/><stop offset="1" stop-color="#a0b0c8"/></linearGradient></defs><rect x="60" y="-1" width="14" height="14" fill="url(#fl)"/><rect x="62.8" y="0" width="8.5" height="6.3" fill="url(#lb)"/><rect x="64" y="8" width="5.6" height="4.3" fill="#dde0f4"/><rect x="64" y="8" width="2.6" height="3" fill="#000"/><rect x="72" y="0.3" width="1" height="1.2" fill="#101030"/><path d="M85.5 -0.5 L93.5 -0.5 L92 5 L83 5 Z" fill="#eef2f8" stroke="#8090a8" stroke-width="0.8"/><path d="M85.5 1.5 h6 M84.8 3.2 h6" stroke="#98a4b8" stroke-width="0.8"/><path d="M81.5 7 Q81.5 4.5 84 4.5 L94 4.5 Q96.3 4.5 96.3 7 L96.3 11.5 Q96.3 13 94.5 13 L83.3 13 Q81.5 13 81.5 11.5 Z" fill="url(#pb)" stroke="#586a86" stroke-width="0.8"/><rect x="82.5" y="8" width="8" height="3" fill="#f8faff"/><rect x="90" y="7.8" width="3" height="3.2" fill="#10c010"/><rect x="91" y="8.6" width="1.2" height="1.2" fill="#a0ff80"/></g></svg>
<svg class="a" style="left:125px;top:482px" width="8" height="12" viewBox="0 0 8 12"><path d="M2 1 H6 V2 H7 V4 H6 V5 H5 V6 H4 V7 H3 V5 H4 V4 H5 V2 H3 V4 H1 V2 H2Z" fill="#0000ff"/><rect x="3" y="9" width="2" height="2" fill="#0000ff"/></svg>
</div></body></html>
